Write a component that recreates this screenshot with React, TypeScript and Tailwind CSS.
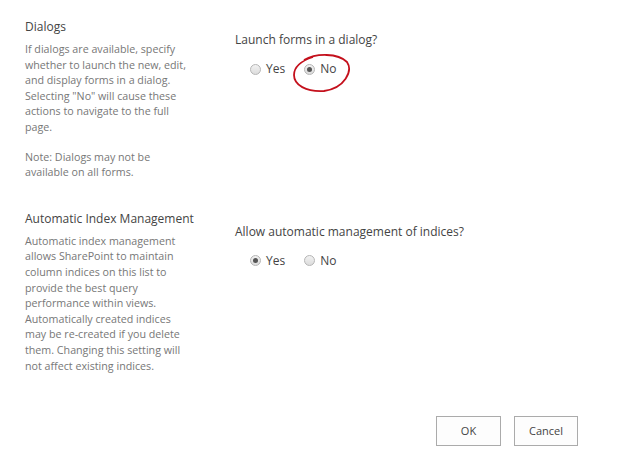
import { useState } from "react";

type Choice = "yes" | "no";

function Radio({ checked, label, onClick }: { checked: boolean; label: string; onClick: () => void }) {
  return (
    <button type="button" onClick={onClick} className="flex items-center gap-[5px] text-[12px] text-[#444]">
      <span className="w-[11px] h-[11px] rounded-full border border-[#b5b5b5] bg-gradient-to-b from-[#f2f2f2] to-[#dcdcdc] flex items-center justify-center">
        {checked && <span className="w-[5px] h-[5px] rounded-full bg-[#555]" />}
      </span>
      <span>{label}</span>
    </button>
  );
}

function Section({
  title,
  lines,
  question,
  value,
  onChange,
  annotate,
}: {
  title: string;
  lines: string[][];
  question: string;
  value: Choice;
  onChange: (v: Choice) => void;
  annotate?: boolean;
}) {
  return (
    <div className="flex">
      <div className="w-[235px] pl-[25px]">
        <h3 className="text-[12px] leading-[16px] text-[#444]">{title}</h3>
        {lines.map((para, i) => (
          <p key={i} className={`text-[10.7px] leading-[15.6px] text-[#777] ${i === 0 ? "mt-[7px]" : "mt-[14px]"}`}>
            {para.map((l, j) => (
              <span key={j} className="block whitespace-nowrap">
                {l}
              </span>
            ))}
          </p>
        ))}
      </div>
      <div className="pt-[13px]">
        <div className="text-[12px] leading-[16px] text-[#444]">{question}</div>
        <div className="relative flex items-center gap-[19px] mt-[12px] ml-[15px]">
          <Radio checked={value === "yes"} label="Yes" onClick={() => onChange("yes")} />
          <Radio checked={value === "no"} label="No" onClick={() => onChange("no")} />
          {annotate && (
            <svg className="absolute left-[42px] top-[-7px]" width="60" height="40" viewBox="0 0 60 40">
              <path
                d="M12 7 C 24 0, 46 0, 55 9 C 61 18, 53 35, 32 38 C 14 39, 2 32, 2 22 C 2 14, 9 8, 21 4"
                fill="none"
                stroke="#c4101c"
                strokeWidth="1.8"
              />
            </svg>
          )}
        </div>
      </div>
    </div>
  );
}

export default function App() {
  const [dialog, setDialog] = useState<Choice>("no");
  const [indices, setIndices] = useState<Choice>("yes");

  return (
    <div
      className="w-[624px] h-[457px] bg-white pt-[19px] flex flex-col"
      style={{ fontFamily: '"Open Sans", "Noto Sans", sans-serif' }}
    >
      <Section
        title="Dialogs"
        lines={[
          [
            "If dialogs are available, specify",
            "whether to launch the new, edit,",
            "and display forms in a dialog.",
            'Selecting "No" will cause these',
            "actions to navigate to the full",
            "page.",
          ],
          ["Note: Dialogs may not be", "available on all forms."],
        ]}
        question="Launch forms in a dialog?"
        value={dialog}
        onChange={setDialog}
        annotate
      />
      <div className="mt-[30px]">
        <Section
          title="Automatic Index Management"
          lines={[
            [
              "Automatic index management",
              "allows SharePoint to maintain",
              "column indices on this list to",
              "provide the best query",
              "performance within views.",
              "Automatically created indices",
              "may be re-created if you delete",
              "them. Changing this setting will",
              "not affect existing indices.",
            ],
          ]}
          question="Allow automatic management of indices?"
          value={indices}
          onChange={setIndices}
        />
      </div>
      <div className="flex justify-end gap-[13px] pr-[46px] mt-auto mb-[11px]">
        <button type="button" className="w-[65px] h-[30px] border border-[#ababab] bg-[#fdfdfd] text-[11px] text-[#444]">
          OK
        </button>
        <button type="button" className="w-[64px] h-[30px] border border-[#ababab] bg-[#fdfdfd] text-[11px] text-[#444]">
          Cancel
        </button>
      </div>
    </div>
  );
}
